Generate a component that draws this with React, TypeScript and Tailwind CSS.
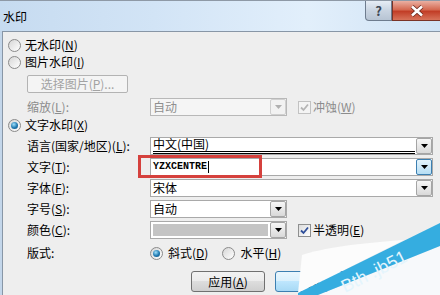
import React from "react";

const Radio = ({ checked, disabled }: { checked?: boolean; disabled?: boolean }) => (
  <span
    className={`relative flex h-[13px] w-[13px] shrink-0 items-center justify-center rounded-full border ${
      disabled ? "border-[#b9b9b9]" : "border-[#8a8a8a]"
    } bg-[linear-gradient(135deg,#d6d6d6,#ffffff)]`}
  >
    {checked && (
      <span className="h-[7px] w-[7px] rounded-full bg-[radial-gradient(circle_at_40%_35%,#9fe0fb,#1f78b0_55%,#0c4f7d)]" />
    )}
  </span>
);

const Check = ({ disabled }: { disabled?: boolean }) => (
  <span
    className={`flex h-[13px] w-[13px] shrink-0 items-center justify-center border ${
      disabled ? "border-[#c2c2c2] bg-[#f4f4f4]" : "border-[#8e8f8f] bg-[linear-gradient(135deg,#dcdcdc,#ffffff)]"
    }`}
  >
    <svg width="9" height="9" viewBox="0 0 9 9">
      <path
        d="M1 4.5 L3.5 7 L8 1.5"
        fill="none"
        stroke={disabled ? "#b5b5b5" : "#2f4f9a"}
        strokeWidth="1.8"
      />
    </svg>
  </span>
);

const Arrow = ({ active, disabled }: { active?: boolean; disabled?: boolean }) => (
  <span
    className={`flex h-[16px] w-[16px] shrink-0 items-center justify-center rounded-[2px] border ${
      active
        ? "border-[#3c7fb1] bg-[linear-gradient(#e5f4fc,#b6def4)]"
        : disabled
        ? "border-[#d0d0d0] bg-[#f2f2f2]"
        : "border-[#a5a5a5] bg-[linear-gradient(#f7f7f7,#d9d9d9)]"
    }`}
  >
    <svg width="7" height="4" viewBox="0 0 7 4">
      <path d="M0 0 H7 L3.5 4 Z" fill={disabled ? "#b0b0b0" : "#000"} />
    </svg>
  </span>
);

const Combo = ({
  w,
  children,
  active,
  disabled,
}: {
  w: string;
  children?: React.ReactNode;
  active?: boolean;
  disabled?: boolean;
}) => (
  <div
    className={`flex h-[18px] ${w} shrink-0 items-center border ${
      disabled ? "border-[#b8b8b8] bg-[#f5f5f5] text-[#8f8f8f]" : "border-[#a9a9a9] bg-white text-black"
    }`}
  >
    <div className="flex h-[16px] flex-1 items-center pl-[2px]">{children}</div>
    <Arrow active={active} disabled={disabled} />
  </div>
);

const Label = ({ children, grey }: { children: React.ReactNode; grey?: boolean }) => (
  <div className={`w-[142px] shrink-0 pl-[19px] ${grey ? "text-[#8c8c8c]" : "text-black"}`}>{children}</div>
);

export default function App() {
  return (
    <div className="relative flex h-[295px] w-[440px] flex-col overflow-hidden bg-[#eeeeee] font-['Noto_Sans_CJK_SC','Liberation_Sans',sans-serif] text-[12px] leading-[14px] text-black">
      {/* title bar */}
      <div className="flex h-[31px] shrink-0 border-t border-[#8e99a6] bg-[linear-gradient(90deg,#c6dbf0,#d2e4f6_35%,#e2effb_70%,#cfe2f4)]">
        <div className="flex-1 pl-[3px] pt-[9px]">水印</div>
        <div className="flex h-[20px] w-[27px] items-center justify-center rounded-bl-[4px] border border-t-0 border-[#6e7c8e] bg-[linear-gradient(#e6edf5,#c9d4e1_50%,#b7c4d3)] text-[13px] font-bold text-[#3d4754]">
          ?
        </div>
        <div className="flex h-[20px] w-[48px] items-center justify-center border-b border-l border-[#7a3326] bg-[linear-gradient(#eab0a2,#d56a52_45%,#c23e27_55%,#d7735a)]">
          <svg width="14" height="12" viewBox="0 0 14 12">
            <path d="M2 1.5 L12 10.5 M12 1.5 L2 10.5" stroke="#6b2a1f" strokeWidth="4.2" />
            <path d="M2 1.5 L12 10.5 M12 1.5 L2 10.5" stroke="#ffffff" strokeWidth="2.6" />
          </svg>
        </div>
      </div>

      {/* body */}
      <div className="flex flex-1">
        <div className="w-[2px] bg-[#c3d6ea]" />
        <div className="flex flex-1 flex-col border-l border-t border-[#8896a6] bg-[#eeeeee] pl-[5px]">
          <div className="mt-[5px] flex h-[16px] items-center gap-[4px]">
            <Radio />
            <span>
              无水印(<u>N</u>)
            </span>
          </div>
          <div className="mt-[1px] flex h-[16px] items-center gap-[4px]">
            <Radio />
            <span>
              图片水印(<u>I</u>)
            </span>
          </div>
          <div className="ml-[19px] mt-[5px] flex h-[18px] w-[101px] items-center justify-center rounded-[2px] border border-[#b3b3b3] bg-[#f4f4f4] text-[#a3a3a3]">
            选择图片(<u>P</u>)...
          </div>
          <div className="mt-[5px] flex h-[18px] items-center">
            <Label grey>
              缩放(<u>L</u>):
            </Label>
            <Combo w="w-[137px]" disabled>
              自动
            </Combo>
            <div className="ml-[11px] flex items-center gap-[2px] text-[#8c8c8c]">
              <Check disabled />
              <span>
                冲蚀(<u>W</u>)
              </span>
            </div>
          </div>
          <div className="mt-[1px] flex h-[16px] items-center gap-[4px]">
            <Radio checked />
            <span>
              文字水印(<u>X</u>)
            </span>
          </div>
          <div className="mt-[4px] flex h-[18px] items-center">
            <Label>
              语言(国家/地区)(<u>L</u>):
            </Label>
            <Combo w="w-[283px]">
              <div className="mr-[1px] flex h-[16px] flex-1 flex-col justify-end">
                <span className="leading-[12px]">中文(中国)</span>
                <div className="mt-[1px] h-[3px] border-y border-black" />
              </div>
            </Combo>
          </div>
          <div className="relative mt-[3px] flex h-[18px] items-center">
            <Label>
              文字(<u>T</u>):
            </Label>
            <Combo w="w-[283px]" active>
              <span className="font-['Liberation_Mono',monospace] text-[10px] font-bold">YZXCENTRE</span>
              <span className="ml-[1px] h-[12px] w-[1px] bg-black" />
            </Combo>
            <div className="absolute left-[130px] top-[-3px] h-[23px] w-[124px] border-[3px] border-[#d5413d]" />
          </div>
          <div className="mt-[3px] flex h-[18px] items-center">
            <Label>
              字体(<u>F</u>):
            </Label>
            <Combo w="w-[283px]">宋体</Combo>
          </div>
          <div className="mt-[3px] flex h-[18px] items-center">
            <Label>
              字号(<u>S</u>):
            </Label>
            <Combo w="w-[137px]">自动</Combo>
          </div>
          <div className="mt-[3px] flex h-[18px] items-center">
            <Label>
              颜色(<u>C</u>):
            </Label>
            <Combo w="w-[137px]">
              <div className="mr-[2px] h-[12px] flex-1 bg-[#c4c4c4]" />
            </Combo>
            <div className="ml-[11px] flex items-center gap-[2px]">
              <Check />
              <span>
                半透明(<u>E</u>)
              </span>
            </div>
          </div>
          <div className="mt-[6px] flex h-[16px] items-center">
            <Label>版式:</Label>
            <div className="flex items-center gap-[5px]">
              <Radio checked />
              <span>
                斜式(<u>D</u>)
              </span>
            </div>
            <div className="ml-[14px] flex items-center gap-[5px]">
              <Radio />
              <span>
                水平(<u>H</u>)
              </span>
            </div>
          </div>
          <div className="ml-[183px] mt-[10px] flex h-[21px] gap-[10px]">
            <div className="flex w-[74px] items-center justify-center rounded-[3px] border border-[#707070] bg-[linear-gradient(#f2f2f2,#ebebeb_50%,#dddddd_50%,#cfcfcf)]">
              应用(<u>A</u>)
            </div>
            <div className="flex w-[74px] items-center justify-center rounded-[3px] border border-[#3c7fb1] bg-[linear-gradient(#eaf6fd,#d9f0fc_50%,#bee6fd_50%,#a7d9f5)]">
              确定
            </div>
          </div>
        </div>
      </div>

      {/* site watermark */}
      <svg
        className="absolute bottom-0 right-0"
        width="150"
        height="80"
        viewBox="290 215 150 80"
      >
        <path d="M302 255 C322 248 360 243 404 240 L298 293 Z" fill="#fcfcfc" />
        <path d="M318 295 L440 246 L440 295 Z" fill="#f7f9fb" />
        <path d="M298 293 L440 223 L440 246 L318 295 L298 295 Z" fill="#35ade0" />
        <text
          x="345"
          y="293"
          transform="rotate(-27 345 293)"
          fontFamily="Liberation Sans, sans-serif"
          fontSize="18"
          fill="#e4f5fd"
        >
          Bth .jb51
        </text>
      </svg>
    </div>
  );
}
